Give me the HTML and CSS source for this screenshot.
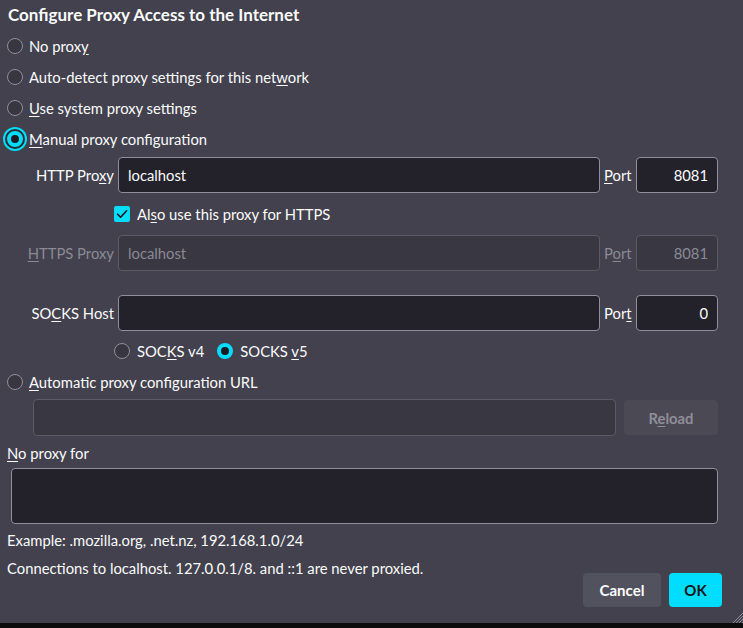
FILE: index.html
```html
<!DOCTYPE html>
<html>
<head>
<meta charset="utf-8">
<link rel="stylesheet" href="styles.css">
</head>
<body>
<div class="dialog">
  <div class="title">Configure Proxy Access to the Internet</div>
  <div class="radio-row"><span class="radio"></span><span>No prox<u>y</u></span></div>
  <div class="radio-row"><span class="radio"></span><span>Auto-detect proxy settings for this net<u>w</u>ork</span></div>
  <div class="radio-row"><span class="radio"></span><span><u>U</u>se system proxy settings</span></div>
  <div class="radio-row"><span class="radio checked focus"></span><span><u>M</u>anual proxy configuration</span></div>

  <div class="manual">
    <div class="proxy-row first">
      <span class="lbl">HTTP Pro<u>x</u>y</span>
      <input class="field" value="localhost">
      <span class="port-lbl"><u>P</u>ort</span>
      <input class="field port" value="8081">
    </div>
    <div class="check-row">
      <span class="checkbox"><svg width="16" height="16" viewBox="0 0 16 16"><path d="M3.6 8.2 L6.6 11.2 L12.6 4.8" fill="none" stroke="#15141a" stroke-width="1.6" stroke-linecap="round" stroke-linejoin="round"/></svg></span>
      <span>Al<u>s</u>o use this proxy for HTTPS</span>
    </div>
    <div class="proxy-row disabled">
      <span class="lbl"><u>H</u>TTPS Proxy</span>
      <input class="field" value="localhost" disabled>
      <span class="port-lbl">P<u>o</u>rt</span>
      <input class="field port" value="8081" disabled>
    </div>
    <div class="proxy-row socks">
      <span class="lbl">SO<u>C</u>KS Host</span>
      <input class="field" value="">
      <span class="port-lbl">Por<u>t</u></span>
      <input class="field port" value="0">
    </div>
    <div class="socks-versions">
      <span class="radio"></span><span class="ver">SOC<u>K</u>S v4</span>
      <span class="radio checked"></span><span>SOCKS <u>v</u>5</span>
    </div>
  </div>

  <div class="radio-row"><span class="radio"></span><span><u>A</u>utomatic proxy configuration URL</span></div>
  <div class="url-row">
    <input class="field url" value="" disabled>
    <button class="reload" disabled>R<u>e</u>load</button>
  </div>

  <div class="noproxy-lbl"><u>N</u>o proxy for</div>
  <textarea class="noproxy"></textarea>
  <div class="note">Example: .mozilla.org, .net.nz, 192.168.1.0/24</div>
  <div class="footer">
    <div class="note">Connections to localhost. 127.0.0.1/8. and ::1 are never proxied.</div>
    <div class="buttons">
      <button class="btn cancel">Cancel</button>
      <button class="btn ok">OK</button>
    </div>
  </div>
  <svg class="grip" width="11" height="11" viewBox="0 0 11 11">
    <path d="M11 1 L1 11 M11 4 L4 11 M11 7 L7 11 M11 10 L10 11" stroke="#8f8f9d" stroke-width="1"/>
  </svg>
</div>
</body>
</html>
```
FILE: styles.css
```css
html, body {
  margin: 0;
  padding: 0;
  background: #0c0c0d;
}

body {
  font-family: Lato, "Noto Sans", sans-serif;
  font-size: 14.8px;
  color: #fbfbfe;
  overflow: hidden;
}

u {
  text-decoration: underline;
  text-underline-offset: 2px;
}

.dialog {
  position: relative;
  box-sizing: border-box;
  height: 623px;
  padding: 0 0 0 7px;
  background: #42414d;
}

.title {
  height: 30px;
  line-height: 30px;
  padding-left: 1px;
  font-size: 17px;
  font-weight: bold;
}

.radio-row {
  display: flex;
  align-items: center;
  gap: 6px;
  height: 31px;
  white-space: nowrap;
}

.radio {
  flex: none;
  width: 16px;
  height: 16px;
  box-sizing: border-box;
  border-radius: 50%;
  border: 1px solid #8f8f9d;
  background: #383741;
}

.radio.checked {
  border: 4px solid #00ddff;
  background: #1c1b22;
}

.radio.focus {
  box-shadow: 0 0 0 2px #2b2a33, 0 0 0 4px #00ddff;
}

.manual {
  margin-left: 22px;
  padding-top: 3px;
}

.proxy-row {
  display: grid;
  grid-template-columns: 85px 482px 28px 82px;
  justify-content: start;
  column-gap: 4px;
  align-items: center;
  height: 36px;
  white-space: nowrap;
}

.proxy-row.socks {
  margin-top: 24px;
}

.lbl {
  justify-self: end;
  text-align: right;
}

.field {
  box-sizing: border-box;
  height: 36px;
  margin: 0;
  padding: 0 9px;
  border: 1px solid #8f8f9d;
  border-radius: 4px;
  background: #23222b;
  color: #fbfbfe;
  font: inherit;
  outline: none;
  width: 100%;
}

.field.port {
  text-align: right;
}

.field:disabled {
  background: #383742;
  border-color: #5b5a65;
  color: #8b8a94;
}

.disabled .lbl,
.disabled .port-lbl {
  color: #8b8a94;
}

.check-row {
  display: flex;
  align-items: center;
  gap: 7px;
  height: 42px;
  padding-left: 85px;
}

.checkbox {
  width: 16px;
  height: 16px;
  border-radius: 2px;
  background: #00ddff;
  display: flex;
}

.socks-versions {
  display: flex;
  align-items: center;
  gap: 7px;
  height: 31px;
  margin-top: 4px;
  padding-left: 85px;
}

.socks-versions .ver {
  margin-right: 6px;
}

.url-row {
  display: flex;
  align-items: center;
  gap: 8px;
  margin: 2px 0 0 26px;
}

.field.url {
  width: 583px;
  height: 37px;
}

.reload {
  width: 94px;
  height: 35px;
  border: none;
  border-radius: 4px;
  background: #4a4954;
  color: #8f8e99;
  font: inherit;
  font-weight: bold;
  padding: 0;
}

.noproxy-lbl {
  margin-top: 5px;
  line-height: 24px;
}

.noproxy {
  display: block;
  box-sizing: border-box;
  width: 707px;
  height: 56px;
  margin: 3px 0 0 4px;
  border: 1px solid #8f8f9d;
  border-radius: 4px;
  background: #23222b;
  color: #fbfbfe;
  font: inherit;
  resize: none;
  outline: none;
}

.note {
  line-height: 24px;
  margin-top: 4px;
}

.footer {
  display: flex;
  justify-content: space-between;
  align-items: flex-start;
  width: 715px;
}

.buttons {
  display: flex;
  gap: 8px;
  margin-top: 21px;
}

.btn {
  height: 34px;
  border: none;
  border-radius: 4px;
  font: inherit;
  font-size: 15px;
  font-weight: bold;
  padding: 0;
}

.cancel {
  width: 78px;
  background: #52515e;
  color: #fbfbfe;
}

.ok {
  width: 53px;
  background: #00ddff;
  color: #15141a;
}

.grip {
  position: absolute;
  right: 0;
  bottom: 0;
}
```
